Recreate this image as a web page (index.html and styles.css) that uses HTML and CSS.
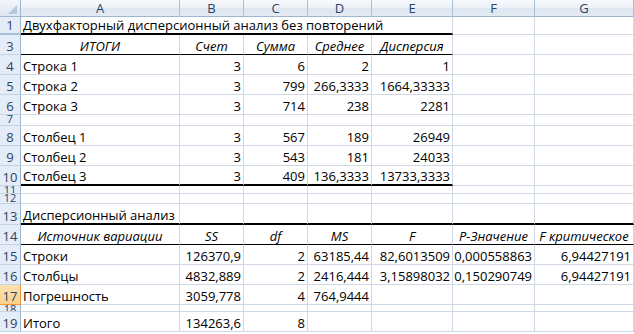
FILE: index.html
```html
<!DOCTYPE html>
<html>
<head>
<meta charset="utf-8">
<link rel="stylesheet" href="styles.css">
</head>
<body>
<div class="sheet">
  <div class="row hdr">
    <div class="corner"><svg width="20" height="16" viewBox="0 0 20 16"><polygon points="17,5 17,14 8,14" fill="#b7c6d8"/></svg></div>
    <div class="ch">A</div><div class="ch">B</div><div class="ch">C</div><div class="ch">D</div><div class="ch">E</div><div class="ch">F</div><div class="ch">G</div>
  </div>

  <div class="row r18">
    <div class="rh hid">1</div>
    <div class="c span5 tb">Двухфакторный дисперсионный анализ без повторений</div>
    <div class="c"></div><div class="c"></div>
  </div>

  <div class="row">
    <div class="rh">3</div>
    <div class="c h b1">ИТОГИ</div><div class="c h b1">Счет</div><div class="c h b1">Сумма</div><div class="c h b1">Среднее</div><div class="c h b1">Дисперсия</div>
    <div class="c"></div><div class="c"></div>
  </div>

  <div class="row">
    <div class="rh">4</div>
    <div class="c">Строка 1</div><div class="c n">3</div><div class="c n">6</div><div class="c n">2</div><div class="c n">1</div>
    <div class="c"></div><div class="c"></div>
  </div>

  <div class="row">
    <div class="rh">5</div>
    <div class="c">Строка 2</div><div class="c n">3</div><div class="c n">799</div><div class="c n">266,3333</div><div class="c n">1664,33333</div>
    <div class="c"></div><div class="c"></div>
  </div>

  <div class="row">
    <div class="rh">6</div>
    <div class="c">Строка 3</div><div class="c n">3</div><div class="c n">714</div><div class="c n">238</div><div class="c n">2281</div>
    <div class="c"></div><div class="c"></div>
  </div>

  <div class="row r11">
    <div class="rh small">7</div>
    <div class="c"></div><div class="c"></div><div class="c"></div><div class="c"></div><div class="c"></div><div class="c"></div><div class="c"></div>
  </div>

  <div class="row">
    <div class="rh">8</div>
    <div class="c">Столбец 1</div><div class="c n">3</div><div class="c n">567</div><div class="c n">189</div><div class="c n">26949</div>
    <div class="c"></div><div class="c"></div>
  </div>

  <div class="row">
    <div class="rh">9</div>
    <div class="c">Столбец 2</div><div class="c n">3</div><div class="c n">543</div><div class="c n">181</div><div class="c n">24033</div>
    <div class="c"></div><div class="c"></div>
  </div>

  <div class="row">
    <div class="rh">10</div>
    <div class="c tb">Столбец 3</div><div class="c n tb">3</div><div class="c n tb">409</div><div class="c n tb">136,3333</div><div class="c n tb">13733,3333</div>
    <div class="c"></div><div class="c"></div>
  </div>

  <div class="row r8">
    <div class="rh small">11</div>
    <div class="c"></div><div class="c"></div><div class="c"></div><div class="c"></div><div class="c"></div><div class="c"></div><div class="c"></div>
  </div>

  <div class="row r10">
    <div class="rh small">12</div>
    <div class="c"></div><div class="c"></div><div class="c"></div><div class="c"></div><div class="c"></div><div class="c"></div><div class="c"></div>
  </div>

  <div class="row r21">
    <div class="rh">13</div>
    <div class="c tb">Дисперсионный анализ</div><div class="c tb"></div><div class="c tb"></div><div class="c tb"></div><div class="c tb"></div><div class="c tb"></div><div class="c tb"></div>
  </div>

  <div class="row">
    <div class="rh">14</div>
    <div class="c h b1">Источник вариации</div><div class="c h b1">SS</div><div class="c h b1">df</div><div class="c h b1">MS</div><div class="c h b1">F</div><div class="c h b1">P-Значение</div><div class="c h b1">F критическое</div>
  </div>

  <div class="row">
    <div class="rh">15</div>
    <div class="c">Строки</div><div class="c n">126370,9</div><div class="c n">2</div><div class="c n">63185,44</div><div class="c n">82,6013509</div><div class="c n">0,000558863</div><div class="c n">6,94427191</div>
  </div>

  <div class="row">
    <div class="rh">16</div>
    <div class="c">Столбцы</div><div class="c n">4832,889</div><div class="c n">2</div><div class="c n">2416,444</div><div class="c n">3,15898032</div><div class="c n">0,150290749</div><div class="c n">6,94427191</div>
  </div>

  <div class="row">
    <div class="rh sel">17</div>
    <div class="c">Погрешность</div><div class="c n">3059,778</div><div class="c n">4</div><div class="c n">764,9444</div><div class="c"></div><div class="c"></div><div class="c"></div>
  </div>

  <div class="row r7">
    <div class="rh small">18</div>
    <div class="c"></div><div class="c"></div><div class="c"></div><div class="c"></div><div class="c"></div><div class="c"></div><div class="c"></div>
  </div>

  <div class="row">
    <div class="rh">19</div>
    <div class="c">Итого</div><div class="c n">134263,6</div><div class="c n">8</div><div class="c"></div><div class="c"></div><div class="c"></div><div class="c"></div>
  </div>
</div>
</body>
</html>
```

FILE: styles.css
```css
* { box-sizing: border-box; }
body {
  margin: 0;
  background: #fff;
  font-family: "Open Sans", "Noto Sans", sans-serif;
  font-size: 13px;
  color: #000;
}
.sheet {
  width: 634px;
  overflow: hidden;
}
.row {
  display: grid;
  grid-template-columns: 21px 159px 64px 64px 64px 81px 82px 99px;
  height: 20px;
}
.row.hdr { height: 17px; }
.row.r18 { height: 18px; }
.row.r21 { height: 21px; }
.row.r11 { height: 11px; }
.row.r10 { height: 10px; }
.row.r8 { height: 8px; }
.row.r7 { height: 7px; }

.corner {
  background: linear-gradient(#f3f6fb, #dde6f2);
  border-right: 1px solid #9eb6ce;
  border-bottom: 1px solid #9eb6ce;
}
.corner svg { display: block; }
.ch {
  background: linear-gradient(#f7f9fc 0%, #eef2f8 45%, #dde6f1 55%, #e3eaf4 100%);
  border-right: 1px solid #a9bfd6;
  border-bottom: 1px solid #9eb6ce;
  text-align: center;
  line-height: 16px;
  color: #2a4466;
}
.rh {
  background: #e4ecf7;
  border-right: 1px solid #9eb6ce;
  border-bottom: 1px solid #c5d3e5;
  display: flex;
  align-items: flex-end;
  justify-content: center;
  line-height: 16px;
  color: #2a4466;
  overflow: hidden;
}
.rh.hid { border-bottom: 2px solid #a9bfd6; }
.rh.small { align-items: flex-start; line-height: 8px; font-size: 11px; }
.rh.sel {
  background: linear-gradient(#fbe2b0, #f8d18a);
  border-right: 1px solid #f29536;
  border-bottom: 1px solid #f29536;
}
.c {
  border-right: 1px solid #d0d7e5;
  border-bottom: 1px solid #d0d7e5;
  display: flex;
  align-items: flex-end;
  padding: 0 2px 0 2px;
  line-height: 16px;
  white-space: nowrap;
  overflow: hidden;
}
.c.span5 { grid-column: span 5; overflow: visible; }
.c.n { justify-content: flex-end; }
.c.h { justify-content: center; font-style: italic; }
.c.tb { border-bottom: 2px solid #000; }
.c.b1 { border-bottom-color: #000; }
```
